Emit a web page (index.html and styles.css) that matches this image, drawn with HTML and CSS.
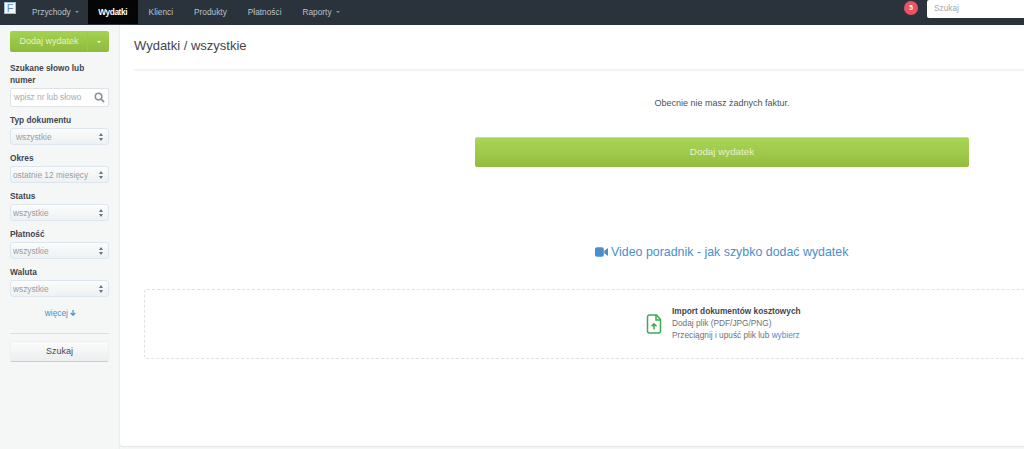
FILE: index.html
```html
<!DOCTYPE html>
<html lang="pl">
<head>
<meta charset="utf-8">
<title>Wydatki</title>
<link rel="stylesheet" href="styles.css">
</head>
<body>
<header class="topbar">
  <div class="logo"><span>F</span></div>
  <nav class="nav">
    <a class="nav-item nav-first">Przychody <i class="caret"></i></a>
    <a class="nav-item active">Wydatki</a>
    <a class="nav-item">Klienci</a>
    <a class="nav-item">Produkty</a>
    <a class="nav-item">Płatności</a>
    <a class="nav-item">Raporty <i class="caret"></i></a>
  </nav>
  <div class="top-right">
    <span class="badge">5</span>
    <div class="top-search">Szukaj</div>
  </div>
</header>
<div class="layout">
  <aside class="sidebar">
    <div class="split-btn">
      <span class="split-main">Dodaj wydatek</span>
      <span class="split-side"><i class="caret caret-white"></i></span>
    </div>
    <div class="field field-first">
      <label class="lbl">Szukane słowo lub numer</label>
      <div class="search-input">
        <span>wpisz nr lub słowo</span>
        <svg class="mag" viewBox="0 0 12 12" width="11" height="11"><circle cx="5" cy="5" r="3.6" fill="none" stroke="#8b9299" stroke-width="1.7"/><path d="M7.8 7.8L11 11" stroke="#8b9299" stroke-width="2"/></svg>
      </div>
    </div>
    <div class="field"><label class="lbl">Typ dokumentu</label><div class="select sel-indent"><span>wszystkie</span><i class="updown"></i></div></div>
    <div class="field"><label class="lbl">Okres</label><div class="select"><span>ostatnie 12 miesięcy</span><i class="updown"></i></div></div>
    <div class="field"><label class="lbl">Status</label><div class="select"><span>wszystkie</span><i class="updown"></i></div></div>
    <div class="field"><label class="lbl">Płatność</label><div class="select"><span>wszystkie</span><i class="updown"></i></div></div>
    <div class="field"><label class="lbl">Waluta</label><div class="select"><span>wszystkie</span><i class="updown"></i></div></div>
    <div class="more">więcej <svg viewBox="0 0 8 8" width="6" height="6"><path d="M4 0v5M1 4l3 3 3-3" fill="none" stroke="#4a8fcb" stroke-width="1.6"/></svg></div>
    <hr class="sep">
    <div class="search-btn">Szukaj</div>
  </aside>
  <main class="main">
    <h1 class="title">Wydatki / wszystkie</h1>
    <div class="content">
      <p class="empty">Obecnie nie masz żadnych faktur.</p>
      <div class="big-btn">Dodaj wydatek</div>
      <a class="video">
        <svg viewBox="0 0 14 10" width="13" height="10"><rect x="0" y="0" width="9.5" height="10" rx="2" fill="#4a8fcb"/><path d="M10 3.6L14 .8v8.4L10 6.4z" fill="#4a8fcb"/></svg>
        <span>Video poradnik - jak szybko dodać wydatek</span>
      </a>
      <div class="dropzone">
        <svg class="file" viewBox="0 0 16 20" width="16" height="20"><path d="M1.5 3a2 2 0 0 1 2-2h7l4 4.500V17a2 2 0 0 1-2 2h-9a2 2 0 0 1-2-2z" fill="none" stroke="#3cab55" stroke-width="1.500"/><path d="M10 1v5h4.500" fill="none" stroke="#3cab55" stroke-width="1.500"/><path d="M8 15.500V10M5.500 12.300L8 9.800l2.500 2.500" fill="none" stroke="#3cab55" stroke-width="1.500"/></svg>
        <div class="drop-text">
          <strong>Import dokumentów kosztowych</strong>
          <span>Dodaj plik (PDF/JPG/PNG)</span>
          <span>Przeciągnij i upuść plik lub <a class="link">wybierz</a></span>
        </div>
      </div>
    </div>
  </main>
</div>
</body>
</html>
```

FILE: styles.css
```css
* { box-sizing: border-box; }
html, body { margin: 0; height: 449px; overflow: hidden; }
body { font-family: "Liberation Sans", Arial, sans-serif; background: #f5f6f6; color: #3f4650; font-size: 9px; }

.topbar { height: 25px; background: #2a323c; display: flex; align-items: stretch; color: #bcc2c8; font-size: 8.300px; }
.logo { width: 15px; margin: 2px 0 0 4px; }
.logo span { display: block; width: 12px; height: 12px; background: #f4f7fa; border: 1px solid #9dbcdb; color: #5d8cba; font-size: 11px; line-height: 11px; text-align: center; font-weight: 400; }
.nav { display: flex; }
.nav-item { display: flex; align-items: center; gap: 2px; padding: 0 10.500px; height: 24px; white-space: nowrap; }
.nav-first { padding-left: 13px; padding-right: 9px; }
.nav-item.active { background: #050505; color: #fff; font-weight: 700; letter-spacing: -0.4px; padding: 0 11px 0 10.500px; }
.caret { display: inline-block; width: 0; height: 0; border: 2px solid transparent; border-top: 2px solid #8a9098; border-bottom: 0; margin-left: 2px; }
.caret-white { border-top-color: #fff; margin: 0; }
.top-right { margin-left: auto; display: flex; align-items: flex-start; }
.badge { width: 14px; height: 14px; border-radius: 50%; background: #ea5363; color: #fff; font-size: 6.500px; font-weight: 700; line-height: 14px; text-align: center; margin: 1px 9px 0 0; }
.top-search { width: 97px; height: 18px; background: #fff; border-radius: 2px 0 0 2px; color: #a4a9ae; font-size: 8.300px; line-height: 17px; padding-left: 7px; }

.layout { display: flex; height: 424px; }
.sidebar { width: 120px; flex: none; padding: 6px 10px 0; border-right: 1px solid #eceeee; }
.split-btn { display: flex; height: 21px; border-radius: 2px; background: linear-gradient(#a5d24f, #8fba3c); color: #e4f1cd; font-size: 9px; line-height: 20px; }
.split-main { width: 78px; text-align: center; padding-left: 1px; border-right: 1px solid #9cc454; }
.split-side { flex: 1; display: flex; align-items: center; justify-content: center; }
.field-first { margin-top: 10px; }
.lbl { display: block; font-weight: 700; font-size: 8.300px; line-height: 12px; color: #3f4650; }
.search-input { position: relative; margin-top: 2px; width: 99px; height: 19px; background: #fff; border: 1px solid #dfe2e4; border-radius: 2px; padding-left: 3px; line-height: 17px; color: #a6abb0; font-size: 8.300px; }
.mag { position: absolute; right: 3px; top: 3px; }
.select { margin-top: 2px; height: 17px; width: 99px; border: 1px solid #dde6ee; border-radius: 3px; background: linear-gradient(#fbfcfc, #eef1f3); padding-left: 2px; display: flex; align-items: center; justify-content: space-between; color: #969da4; font-size: 8.300px; }
.sel-indent { padding-left: 5px; }
.updown { width: 5px; height: 8px; margin-right: 4px; position: relative; }
.updown::before, .updown::after { content: ""; position: absolute; left: 0; border: 2.500px solid transparent; }
.updown::before { top: 0; border-bottom: 3px solid #68707a; border-top: 0; }
.updown::after { bottom: 0; border-top: 3px solid #68707a; border-bottom: 0; }
.field + .field { margin-top: 7px; }
.more { margin-top: 11px; text-align: center; color: #4a8fcb; font-size: 8.300px; line-height: 10px; padding-left: 2px; }
.sep { margin: 15px 0 0; border: 0; border-top: 1px solid #dcdfe0; width: 99px; }
.search-btn { margin-top: 7px; width: 99px; height: 21px; background: linear-gradient(#fbfbfb, #eceeef); border: 1px solid #eef0f1; border-bottom: 1px solid #c9cccf; border-radius: 2px; text-align: center; line-height: 19px; font-size: 9px; color: #444b53; }

.main { flex: 1; min-width: 0; background: #fff; margin-bottom: 3px; border-radius: 0 0 0 3px; box-shadow: 0 1px 1px #e3e6e8; }
.title { margin: 0; height: 44px; padding: 13px 0 0 14px; font-weight: 400; font-size: 13px; line-height: 16px; color: #3f4650; }
.content { border-top: 2px solid #f3f4f4; margin-left: 14px; display: flex; flex-direction: column; height: 378px; }
.empty { margin: 26px 0 0 341px; width: 494px; line-height: 12px; font-size: 9px; text-align: center; color: #4a5058; }
.big-btn { margin: 28px 0 0 341px; width: 494px; height: 30px; border-radius: 2px; background: linear-gradient(#a9d655, #94bd40); border-top: 1px solid #c4e08a; color: #e6f2d0; text-align: center; line-height: 28px; font-size: 9.800px; }
.video { margin: 77px 0 0 461px; display: flex; align-items: center; gap: 3px; color: #4a8fcb; font-size: 12.400px; line-height: 16px; white-space: nowrap; }
.dropzone { margin: 29px 0 0 10px; height: 70px; width: 900px; border: 1px dashed #dfe1e4; border-radius: 3px; display: flex; align-items: center; padding: 0 0 2px 501px; gap: 10px; }
.file { flex: none; margin-top: 2px; }
.drop-text { display: flex; flex-direction: column; font-size: 8.300px; line-height: 12px; color: #6b7279; white-space: nowrap; }
.drop-text strong { color: #3f4650; }
.link { color: #4a8fcb; }
```
